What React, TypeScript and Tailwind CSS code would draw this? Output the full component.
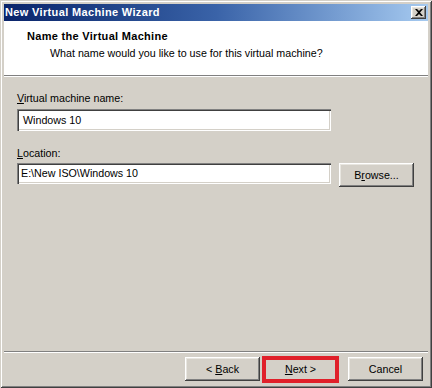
import React from 'react'

const raised =
  'bg-[#d4d0c8] shadow-[inset_-1px_-1px_#404040,inset_1px_1px_#ffffff,inset_-2px_-2px_#808080,inset_2px_2px_#e8e6e0]'
const sunken =
  'bg-white shadow-[inset_1px_1px_#808080,inset_2px_2px_#404040,inset_-1px_-1px_#ffffff,inset_-2px_-2px_#d4d0c8]'

const Btn: React.FC<{ children: React.ReactNode; className?: string }> = ({ children, className }) => (
  <button className={`${raised} h-[24px] w-[75px] flex items-center justify-center text-black ${className || ''}`}>
    {children}
  </button>
)

export default function App() {
  return (
    <div className="w-[432px] h-[388px] bg-[#d4d0c8] p-[4px] flex flex-col text-[10.7px] leading-[13px] text-black font-['Liberation_Sans',Arial,sans-serif] shadow-[inset_1px_1px_#d4d0c8,inset_-1px_-1px_#404040,inset_2px_2px_#ffffff,inset_-2px_-2px_#808080]">
      {/* title bar */}
      <div className="h-[17px] shrink-0 bg-gradient-to-r from-[#0a246a] via-[#3a63a8] to-[#a6caf0] flex items-center justify-between pl-[1px] pr-[2px]">
        <span className="text-white font-bold text-[11px] tracking-[0.35px]">New Virtual Machine Wizard</span>
        <span className={`${raised} w-[15px] h-[13px] flex items-center justify-center`}>
          <svg width="8" height="7" viewBox="0 0 8 7">
            <path d="M0 0h2l2 2 2-2h2L5 3.5 8 7H6L4 5 2 7H0l3-3.5z" fill="#000" />
          </svg>
        </span>
      </div>

      {/* header */}
      <div className="h-[55px] shrink-0 bg-white border-b border-b-[#808080] shadow-[0_1px_#ffffff] pt-[9px]">
        <div className="pl-[23px] font-bold text-[11px] tracking-[0.3px]">Name the Virtual Machine</div>
        <div className="pl-[46px] mt-[4px]">What name would you like to use for this virtual machine?</div>
      </div>

      {/* body */}
      <div className="flex-1 pt-[16px] pl-[13px]">
        <div className="h-[13px]">
          <span className="underline">V</span>irtual machine name:
        </div>
        <div className={`${sunken} mt-[4px] w-[314px] h-[22px] flex items-center pl-[6px]`}>Windows 10</div>
        <div className="h-[13px] mt-[16px]">
          <span className="underline">L</span>ocation:
        </div>
        <div className="mt-[3px] flex items-start gap-[8px]">
          <div className={`${sunken} w-[314px] h-[21px] flex items-center pl-[4px]`}>E:\New ISO\Windows 10</div>
          <Btn className="w-[73px] h-[22px]">
            B<span className="underline">r</span>owse...
          </Btn>
        </div>
      </div>

      {/* bottom separator */}
      <div className="h-[2px] shrink-0 border-t border-t-[#808080] border-b border-b-white" />

      {/* buttons */}
      <div className="h-[31px] shrink-0 pt-[4px] flex justify-end pr-[5px]">
        <Btn>
          &lt; <span className="underline ml-[3px]">B</span>ack
        </Btn>
        <div className="relative ml-[3px]">
          <Btn>
            <span className="underline">N</span>ext &gt;
          </Btn>
          <div className="absolute left-[-1px] top-[-1px] w-[77px] h-[27px] border-[4px] border-[#e0202a]" />
        </div>
        <Btn className="ml-[10px]">Cancel</Btn>
      </div>
    </div>
  )
}
